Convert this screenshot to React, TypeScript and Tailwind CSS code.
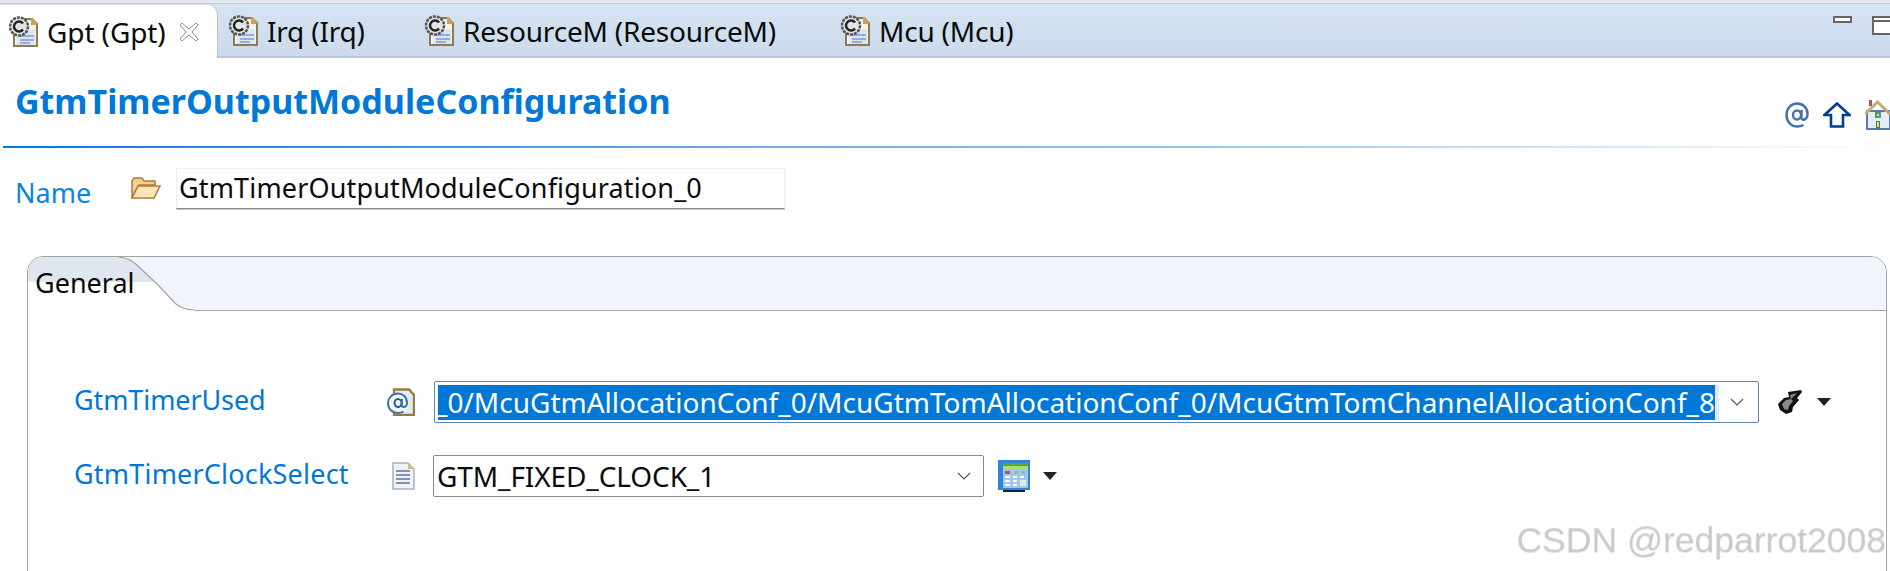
const SANS = "font-['Noto_Sans','Open_Sans',sans-serif]";

function TabIcon() {
  return (
    <svg width="30" height="32" viewBox="0 0 30 32" className="shrink-0">
      <path d="M6 3H24L29 8V30H6Z" fill="#f4f4ea" stroke="#8f7b4d" strokeWidth="2" />
      <path d="M23 2H25L29 7V9H23Z" fill="#c9a25a" />
      <rect x="9" y="14" width="18" height="15" fill="#dbe6f5" />
      <path d="M12 20H26M12 24H26M12 27H22" stroke="#7f9cc6" strokeWidth="1.5" />
      <circle cx="11" cy="10.5" r="9" fill="#e4e4e4" stroke="#555" strokeWidth="2.500" strokeDasharray="3 1" />
      <path d="M15 7.500A5 5 0 1 0 15 13.500" fill="none" stroke="#222" strokeWidth="2.500" />
    </svg>
  );
}

function EditorTab({ label, width }: { label: string; width: string }) {
  return (
    <div className={`flex items-center pt-[2px] ${width}`}>
      <TabIcon />
      <span className="ml-[9px] text-[28px] tracking-[-0.2px] text-[#0b0b0b] leading-none whitespace-nowrap">{label}</span>
    </div>
  );
}

function CloseX() {
  return (
    <svg width="20" height="20" viewBox="0 0 20 20" className="ml-[13px] mt-[1px] shrink-0">
      <path d="M1 3L3 1L10 7L17 1L19 3L13 10L19 17L17 19L10 13L3 19L1 17L7 10Z" fill="#fff" stroke="#8a8a8a" strokeWidth="1" />
    </svg>
  );
}

function Chevron() {
  return (
    <svg width="14" height="8" viewBox="0 0 14 8" className="shrink-0">
      <path d="M1 1L7 7L13 1" fill="none" stroke="#555" strokeWidth="1.2" />
    </svg>
  );
}

function Triangle() {
  return (
    <svg width="14" height="8" viewBox="0 0 14 8">
      <path d="M0 0H14L7 8Z" fill="#222" />
    </svg>
  );
}

function AtIcon() {
  return (
    <svg width="24" height="26" viewBox="0 0 24 26" className="shrink-0">
      <ellipse cx="12" cy="13" rx="4" ry="4.500" fill="none" stroke="#3d74a8" strokeWidth="2.400" />
      <path d="M16.500 8V16C17 19 22 18 22.500 13C23 6 18 1.500 12 1.500C6 1.500 1.500 6.500 1.500 13C1.500 19.500 6 24.500 12 24.500C14.500 24.500 16.500 24 18.500 23" fill="none" stroke="#3d74a8" strokeWidth="2.400" />
    </svg>
  );
}

function Home() {
  return (
    <svg width="25" height="30" viewBox="0 0 25 30" className="shrink-0">
      <rect x="2" y="11" width="23" height="18" fill="#e4eef8" stroke="#5a78ad" strokeWidth="2" />
      <path d="M0 14L12.500 2L25 14" fill="none" stroke="#c9a878" strokeWidth="3" />
      <rect x="4" y="0" width="3" height="6" fill="#a8583c" />
      <rect x="10" y="12" width="6" height="6" fill="#4f9b78" />
      <rect x="12" y="14" width="2" height="2" fill="#f0e060" />
      <rect x="11" y="21" width="4" height="8" fill="#3c7a8c" />
      <rect x="12" y="22" width="2" height="5" fill="#e8e030" />
    </svg>
  );
}

function Swoosh() {
  return (
    <svg width="77" height="54" viewBox="0 0 77 54" className="shrink-0 block">
      <rect width="77" height="54" fill="#f1f5fb" />
      <path d="M0 0C10 1 16 5 20 9L39 27L58 47C64 52 70 53 77 53V54H0Z" fill="#fff" />
      <path d="M0 1C10 1 16 5 20 9L36 25H0Z" fill="#dfe6ef" />
      <path d="M0 0C10 1 16 5 20 9L39 27L58 47C64 52 70 53 77 53" fill="none" stroke="#a3a3a3" strokeWidth="1.2" />
    </svg>
  );
}

function CalendarIcon() {
  return (
    <svg width="32" height="32" viewBox="0 0 32 32" className="shrink-0">
      <rect width="32" height="30" fill="#2f86d8" />
      <rect x="5" y="30" width="22" height="2" fill="#123" />
      <rect x="5" y="3" width="25" height="7" fill="#a4dc80" />
      <rect x="5" y="3" width="25" height="3" fill="#58a838" />
      <rect x="5" y="10" width="25" height="18" fill="#9cc8f0" />
      <rect x="7" y="11" width="5" height="3" fill="#d84a3c" />
      <rect x="16" y="11" width="4" height="3" fill="#b0b0a0" />
      <rect x="23" y="11" width="4" height="3" fill="#b0b0a0" />
      <path d="M7 17H12M15 17H19M22 17H26M7 21H12M15 21H19M7 25H12M15 25H19" stroke="#fff" strokeWidth="2" />
      <rect x="22" y="20" width="6" height="6" fill="#e8e8e0" />
    </svg>
  );
}

function HammerIcon() {
  return (
    <svg width="24" height="26" viewBox="0 0 24 26" className="shrink-0">
      <path d="M10 3L23 1L24 3L19 9L21 11L15 18L14 23L8 25L2 21L0 15L6 9L11 8Z" fill="#111" />
      <path d="M12 6L19 4L13 10L15 12L11 17L10 21L6 20L4 15L8 11L13 10Z" fill="#8f8a84" />
    </svg>
  );
}

function AtDocIcon() {
  return (
    <svg width="28" height="28" viewBox="0 0 28 28" className="shrink-0">
      <path d="M7 1.500H22L27 7V27H7Z" fill="#e2ebf8" stroke="#9a7c3a" strokeWidth="2.400" />
      <circle cx="11" cy="15" r="10.500" fill="#f4f8fd" />
      <ellipse cx="11" cy="15" rx="3.500" ry="4" fill="none" stroke="#245d94" strokeWidth="2" />
      <path d="M15 11V18C16 20 20 19 20 15C20 9 16 5.500 11 5.500C5 5.500 1 10 1 15C1 21 5 25 11 25C13 25 15 24.500 16.500 23.500" fill="none" stroke="#3d74a8" strokeWidth="2" />
    </svg>
  );
}

export default function App() {
  return (
    <div className={`relative w-[1890px] h-[571px] overflow-hidden bg-white ${SANS}`}>
      {/* editor tab strip */}
      <div className="h-[4px] bg-[#e6e6f1] border-b border-[#c9c9d6]" />
      <div className="flex h-[54px] bg-linear-to-b from-[#d5e3f2] to-[#ccdbec] border-b-2 border-[#b9c6dc]">
        <div className="flex items-center w-[218px] h-[53px] pl-[8px] bg-white rounded-tr-[10px] border-r border-[#b4c2d8] mt-[1px]">
          <TabIcon />
          <span className="ml-[9px] text-[28px] tracking-[-0.1px] text-[#0b0b0b] leading-none whitespace-nowrap">Gpt (Gpt)</span>
          <CloseX />
        </div>
        <div className="pl-[10px] flex">
          <EditorTab label="Irq (Irq)" width="w-[196px]" />
          <EditorTab label="ResourceM (ResourceM)" width="w-[416px]" />
          <EditorTab label="Mcu (Mcu)" width="w-[300px]" />
        </div>
        <div className="flex-1 flex justify-end gap-[20px] pt-[12px]">
          <div className="w-[19px] h-[7px] border-2 border-[#666] bg-white" />
          <div className="w-[18px] h-[19px] border-2 border-[#666] border-r-0 bg-white">
            <div className="h-[2px] mt-[2px] bg-[#666]" />
          </div>
        </div>
      </div>

      {/* form heading */}
      <div className="flex items-start justify-between h-[88px] pl-[15px] pt-[23px]">
        <h1 className="text-[34px] font-bold leading-[40px] text-[#0078d7] whitespace-nowrap">GtmTimerOutputModuleConfiguration</h1>
        <div className="flex items-center gap-[14px] mt-[19px]">
          <AtIcon />
          <svg width="28" height="26" viewBox="0 0 28 26" className="shrink-0">
            <path d="M14 1.500L26.500 13H20V24.500H8V13H1.500Z" fill="#fff" stroke="#003f94" strokeWidth="2.600" strokeLinejoin="miter" />
          </svg>
          <Home />
        </div>
      </div>
      <div className="ml-[3px] h-[2px] bg-linear-to-r from-[#0078d7] via-[#8cc2ef] via-60% to-white" />

      {/* name row */}
      <div className="flex items-center mt-[19px] h-[42px] pl-[15px]">
        <span className="w-[116px] text-[27px] tracking-[0px] text-[#0a84e0] leading-none pt-[9px]">Name</span>
        <svg width="30" height="22" viewBox="0 0 30 22" className="shrink-0">
          <path d="M1 20V4L3 1H11L13 4H24V8H8L1 20Z" fill="#f2d08e" stroke="#b27a3a" strokeWidth="1.500" />
          <path d="M1 21L7 9H29L23 21Z" fill="#fbe7b6" stroke="#b27a3a" strokeWidth="1.500" />
        </svg>
        <div className="ml-[15px] w-[609px] h-[41px] pl-[2px] flex items-center border border-[#eeeeee] border-b-[#8a8a8a] shadow-[0_1px_0_#c8c8c8] text-[27px] tracking-[0.15px] text-[#0b0b0b] whitespace-nowrap">
          GtmTimerOutputModuleConfiguration_0
        </div>
      </div>

      {/* tab folder */}
      <div className="ml-[27px] mr-[3px] mt-[47px] h-[400px] border border-[#a3a3a3] rounded-t-[16px] overflow-hidden">
        <div className="flex h-[54px]">
          <div className="relative z-10 w-[90px] pl-[7px] pt-[10px] text-[27px] leading-[32px] text-[#0b0b0b] whitespace-nowrap bg-linear-to-b from-[#dfe6ef] from-[25px] to-white to-[25px]">General</div>
          <Swoosh />
          <div className="flex-1 bg-[#f1f5fb] border-b border-[#a3a3a3]" />
        </div>

        <div className="grid grid-cols-[359px_1fr] grid-rows-[42px_42px] gap-y-[32px] mt-[70px] pl-[46px] items-center text-[27px] text-[#0078d7] tracking-[-0.1px]">
          {/* GtmTimerUsed */}
          <span className="-mt-[6px] leading-none">GtmTimerUsed</span>
          <div className="flex items-center -ml-[46px]">
            <AtDocIcon />
            <div className="ml-[19px] w-[1325px] h-[42px] flex items-center border border-[#5f87ad] rounded-[2px] pl-[3px]">
              <div className="w-[1277px] h-[35px] flex items-center justify-end overflow-hidden bg-[#0078d7] text-white text-[28px] tracking-[0px] whitespace-nowrap leading-none">
                <span className="shrink-0">_0/McuGtmAllocationConf_0/McuGtmTomAllocationConf_0/McuGtmTomChannelAllocationConf_8</span>
              </div>
              <div className="w-[4px] h-[35px] bg-[#e2eaf8]" />
              <div className="flex-1 flex justify-end pr-[14px]"><Chevron /></div>
            </div>
            <div className="ml-[19px]"><HammerIcon /></div>
            <div className="ml-[15px] flex"><Triangle /></div>
          </div>

          {/* GtmTimerClockSelect */}
          <span className="-mt-[5px] leading-none tracking-[0.2px]">GtmTimerClockSelect</span>
          <div className="flex items-center -ml-[46px]">
            <svg width="23" height="28" viewBox="0 0 23 28" className="shrink-0 ml-[5px]">
              <path d="M1 1H16L22 7V27H1Z" fill="#f0f3fa" stroke="#a9aec4" strokeWidth="1.500" />
              <path d="M16 1L22 7H16Z" fill="#d2bd80" />
              <path d="M4 9H18M4 13H18M4 17H18M4 21H18" stroke="#7f93bd" strokeWidth="1.800" />
            </svg>
            <div className="ml-[18px] w-[551px] h-[42px] flex items-center justify-between border border-[#8a8a8a] rounded-[2px] pl-[3px] pr-[12px] text-[28px] text-[#0b0b0b] tracking-[-0.1px] whitespace-nowrap">
              GTM_FIXED_CLOCK_1
              <Chevron />
            </div>
            <div className="ml-[14px]"><CalendarIcon /></div>
            <div className="ml-[13px] flex"><Triangle /></div>
          </div>
        </div>
      </div>

      {/* watermark */}
      <div className="absolute right-[4px] bottom-[13px] text-[35.500px] leading-none text-[#a0a0a0]/40 [text-shadow:0_1px_1px_#e4e4e4] whitespace-nowrap font-['Liberation_Sans',sans-serif]">CSDN @redparrot2008</div>
    </div>
  );
}
